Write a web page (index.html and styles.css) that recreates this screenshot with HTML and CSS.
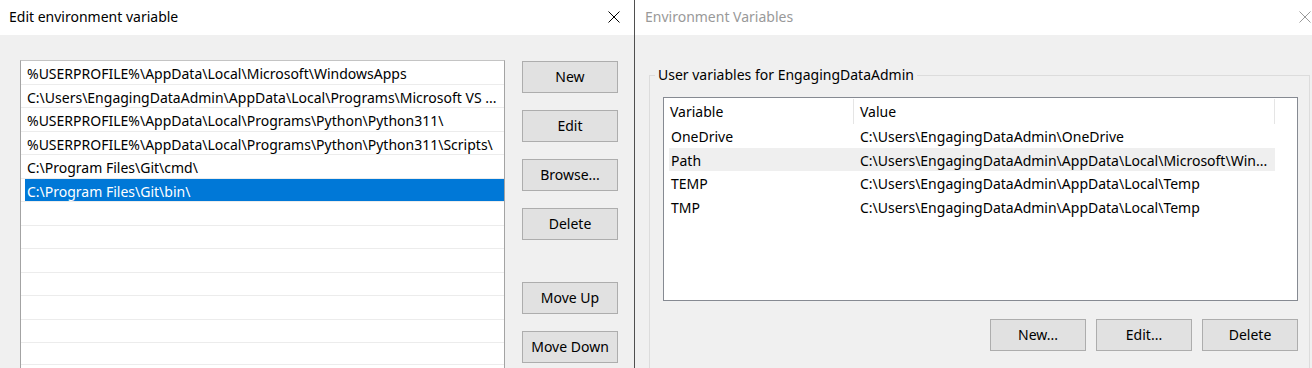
FILE: index.html
```html
<!DOCTYPE html>
<html lang="en">
<head>
<meta charset="utf-8">
<title>Environment Variables</title>
<link rel="stylesheet" href="styles.css">
</head>
<body>
<div class="screen">
  <section class="win win-edit">
    <header class="titlebar">
      <span class="title">Edit environment variable</span>
      <svg class="close" width="12" height="12" viewBox="0 0 12 12"><path d="M0.5 0.5L11.5 11.5M11.5 0.5L0.5 11.5" stroke="#000" stroke-width="1" fill="none"/></svg>
    </header>
    <div class="content edit-content">
      <div class="listbox">
        <div class="row"><span class="cell">%USERPROFILE%\AppData\Local\Microsoft\WindowsApps</span></div>
        <div class="row"><span class="cell">C:\Users\EngagingDataAdmin\AppData\Local\Programs\Microsoft VS ...</span></div>
        <div class="row"><span class="cell">%USERPROFILE%\AppData\Local\Programs\Python\Python311\</span></div>
        <div class="row"><span class="cell">%USERPROFILE%\AppData\Local\Programs\Python\Python311\Scripts\</span></div>
        <div class="row"><span class="cell">C:\Program Files\Git\cmd\</span></div>
        <div class="row selected"><span class="cell">C:\Program Files\Git\bin\</span></div>
        <div class="row"><span class="cell"></span></div>
        <div class="row"><span class="cell"></span></div>
        <div class="row"><span class="cell"></span></div>
        <div class="row"><span class="cell"></span></div>
        <div class="row"><span class="cell"></span></div>
        <div class="row"><span class="cell"></span></div>
        <div class="row row-last"><span class="cell"></span></div>
      </div>
      <div class="btn-col">
        <button class="btn">New</button>
        <button class="btn">Edit</button>
        <button class="btn">Browse...</button>
        <button class="btn">Delete</button>
        <button class="btn btn-sep">Move Up</button>
        <button class="btn">Move Down</button>
      </div>
    </div>
  </section>
  <section class="win win-env">
    <header class="titlebar titlebar-inactive">
      <span class="title">Environment Variables</span>
      <svg class="close" width="12" height="12" viewBox="0 0 12 12"><path d="M0.5 0.5L11.5 11.5M11.5 0.5L0.5 11.5" stroke="#9a9a9a" stroke-width="1" fill="none"/></svg>
    </header>
    <div class="content env-content">
      <fieldset class="group">
        <legend class="group-label">User variables for EngagingDataAdmin</legend>
        <div class="listview">
          <div class="lv-header">
            <div class="lv-h lv-h1">Variable</div>
            <div class="lv-h lv-h2">Value</div>
          </div>
          <div class="lv-row"><span class="lv-c1">OneDrive</span><span class="lv-c2">C:\Users\EngagingDataAdmin\OneDrive</span></div>
          <div class="lv-row lv-sel"><span class="lv-c1">Path</span><span class="lv-c2">C:\Users\EngagingDataAdmin\AppData\Local\Microsoft\Win...</span></div>
          <div class="lv-row"><span class="lv-c1">TEMP</span><span class="lv-c2">C:\Users\EngagingDataAdmin\AppData\Local\Temp</span></div>
          <div class="lv-row"><span class="lv-c1">TMP</span><span class="lv-c2">C:\Users\EngagingDataAdmin\AppData\Local\Temp</span></div>
        </div>
        <div class="btn-row">
          <button class="btn">New...</button>
          <button class="btn">Edit...</button>
          <button class="btn">Delete</button>
        </div>
      </fieldset>
    </div>
  </section>
</div>
</body>
</html>
```
FILE: styles.css
```css
* { box-sizing: border-box; }

html, body {
  margin: 0;
  padding: 0;
}

body {
  width: 1312px;
  height: 368px;
  overflow: hidden;
  background: #f0f0f0;
  color: #000;
  font-family: "Noto Sans", "Open Sans", sans-serif;
  font-size: 14px;
}

.screen {
  display: flex;
  height: 368px;
}

.win {
  display: flex;
  flex-direction: column;
  height: 368px;
  flex: none;
  overflow: hidden;
}

.win-edit { width: 634px; }

.win-env {
  width: 678px;
  border-left: 1px solid #4f4f4f;
}

.titlebar {
  flex: none;
  height: 35px;
  background: #fff;
  display: flex;
  align-items: center;
  justify-content: space-between;
  padding: 0 14px 1px 9px;
}

.title { line-height: 20px; }

.titlebar-inactive {
  padding: 0 1px 1px 10px;
  color: #999;
}

.close { display: block; }

.content {
  flex: 1;
  background: #f0f0f0;
}

/* Left dialog */
.edit-content {
  display: flex;
  align-items: flex-start;
  gap: 17px;
  padding: 25px 0 0 20px;
}

.listbox {
  flex: none;
  width: 485px;
  height: 308px;
  overflow: hidden;
  background: #fff;
  border: 1px solid #a3a3a3;
  border-top-color: #c4c4c4;
  border-bottom: none;
}

.row {
  height: 23.5px;
  border-bottom: 1px solid #ececec;
  padding-left: 4px;
  display: flex;
}

.row-last { height: 22px; }

.cell {
  flex: 1;
  padding: 3px 0 0 2px;
  line-height: 19px;
  white-space: nowrap;
  overflow: hidden;
}

.selected .cell {
  background: #0078d7;
  color: #fff;
}

.btn-col {
  display: flex;
  flex-direction: column;
  gap: 17px;
  padding-top: 1px;
  width: 96px;
}

.btn {
  width: 96px;
  height: 32px;
  padding: 0 0 1px;
  background: #e1e1e1;
  border: 1px solid #adadad;
  border-radius: 0;
  font-family: inherit;
  font-size: 14px;
  color: #000;
  text-align: center;
}

.btn-sep { margin-top: 25px; }

/* Right dialog */
.env-content {
  padding: 0 2px 0 14px;
}

.group {
  margin: 30px 0 0;
  padding: 12px 12px 17px 13px;
  border: 1px solid #dcdcdc;
  border-bottom: none;
  min-width: 0;
}

.group-label {
  margin-left: -8px;
  padding: 0 3px;
  line-height: 20px;
}

.listview {
  width: 635px;
  height: 204px;
  background: #fff;
  border: 1px solid #868a92;
}

.lv-header {
  display: flex;
  height: 26px;
  padding-top: 1px;
}

.lv-h {
  padding: 3px 0 0 6px;
  line-height: 20px;
  border-right: 1px solid #e5e5e5;
}

.lv-h1 { width: 190px; }
.lv-h2 { width: 421px; }

.lv-row {
  display: flex;
  height: 23.5px;
  width: 606px;
  margin-left: 5px;
  padding-top: 3px;
  line-height: 19px;
  white-space: nowrap;
}

.lv-sel { background: #efefef; }

.lv-c1 {
  width: 189px;
  padding-left: 2px;
}

.lv-c2 {
  flex: 1;
  padding-left: 2px;
  overflow: hidden;
}

.btn-row {
  width: 635px;
  display: flex;
  justify-content: flex-end;
  gap: 10px;
  margin-top: 18px;
}
```
